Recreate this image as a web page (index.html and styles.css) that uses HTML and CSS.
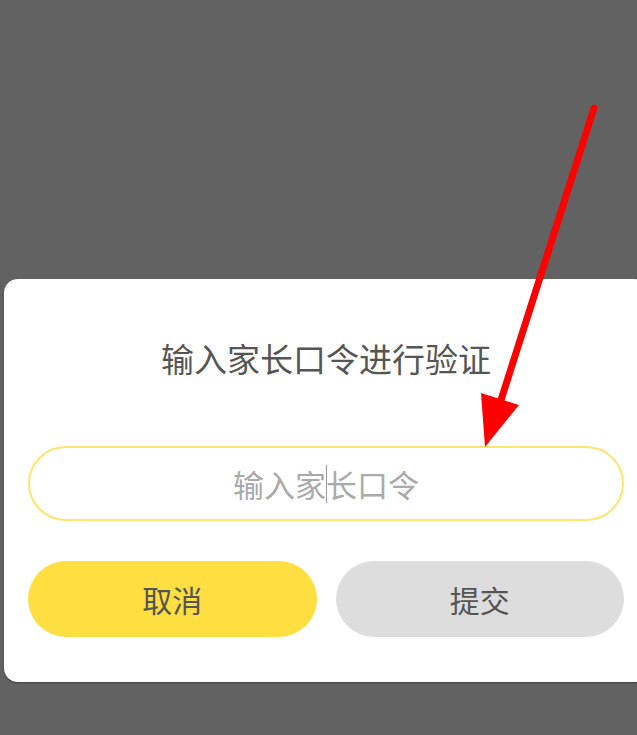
FILE: index.html
```html
<!DOCTYPE html>
<html lang="zh">
<head>
<meta charset="utf-8">
<title>家长口令验证</title>
<link rel="stylesheet" href="styles.css">
</head>
<body>
<div class="screen">
  <div class="dialog">
    <div class="title">输入家长口令进行验证</div>
    <div class="field">
      <span class="placeholder">输入家<span class="caret"></span>长口令</span>
    </div>
    <div class="actions">
      <div class="btn btn-cancel">取消</div>
      <div class="btn btn-submit">提交</div>
    </div>
  </div>
  <svg class="arrow" width="637" height="735" viewBox="0 0 637 735">
    <line x1="594" y1="108" x2="501" y2="400" stroke="#ff0000" stroke-width="7" stroke-linecap="round"/>
    <polygon points="481,393 519,405 485,447" fill="#ff0000"/>
  </svg>
</div>
</body>
</html>
```
FILE: styles.css
```css
html, body {
  margin: 0;
  padding: 0;
  background: #626262;
  overflow: hidden;
}
.screen {
  position: relative;
  width: 637px;
  height: 735px;
  overflow: hidden;
  font-family: "Noto Sans CJK SC", "Noto Sans", sans-serif;
}
.dialog {
  margin-top: 279px;
  margin-left: 4px;
  width: 644px;
  box-sizing: border-box;
  height: 403px;
  padding: 56px 24px 0;
  background: #ffffff;
  border-radius: 14px;
  box-shadow: 0 1px 2px rgba(0,0,0,0.35);
}
.title {
  height: 46px;
  line-height: 46px;
  font-size: 33px;
  color: #555555;
  text-align: center;
}
.field {
  margin-top: 65px;
  height: 75px;
  box-sizing: border-box;
  border: 2px solid #ffe46e;
  border-radius: 38px;
  display: flex;
  align-items: center;
  justify-content: center;
}
.placeholder {
  font-size: 31px;
  color: #aaaaaa;
  line-height: 40px;
  display: inline-flex;
  align-items: center;
}
.caret {
  display: inline-block;
  width: 1px;
  height: 38px;
  background: #999999;
  margin: 0 -1px 0 0;
}
.actions {
  margin-top: 40px;
  display: flex;
  gap: 19px;
}
.btn {
  flex: 1;
  height: 76px;
  border-radius: 38px;
  display: flex;
  align-items: center;
  justify-content: center;
  font-size: 30px;
  color: #555555;
}
.btn-cancel {
  background: #ffde42;
}
.btn-submit {
  background: #dddddd;
}
.arrow {
  position: absolute;
  left: 0;
  top: 0;
}
```
